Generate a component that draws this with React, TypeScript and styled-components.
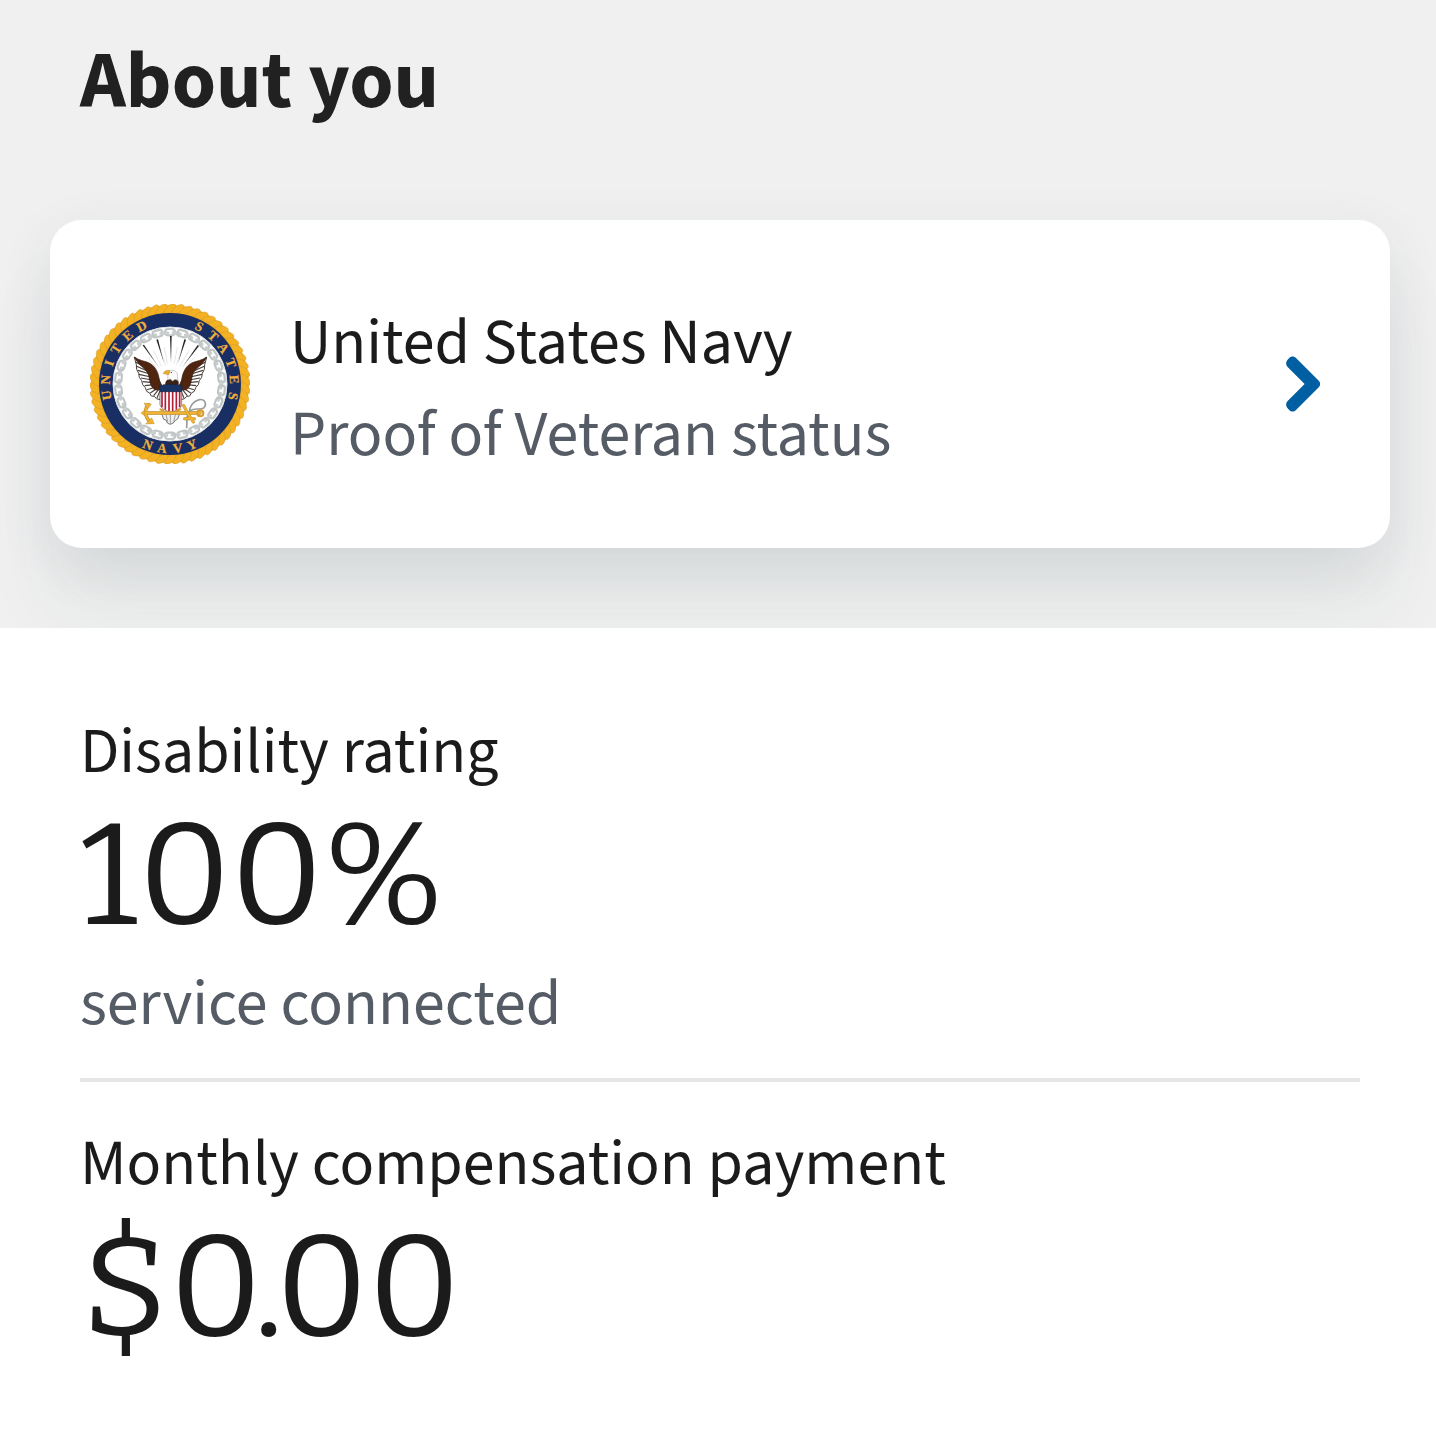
import React from "react";
import styled, { createGlobalStyle } from "styled-components";

const GlobalStyle = createGlobalStyle`
  * { box-sizing: border-box; }
  body {
    margin: 0;
    background: #ffffff;
    color: #1b1b1b;
    font-family: "Source Sans 3", "Noto Sans CJK SC", sans-serif;
  }
`;

const AboutSection = styled.section`
  padding: 30px 46px 80px 50px;
  background: #f0f0f0;
  overflow: hidden;
`;

const Heading = styled.h2`
  margin: 0 30px 86px;
  font-size: 80px;
  line-height: 104px;
  font-weight: 700;
  color: #212121;
`;

const ServiceCard = styled.button`
  display: flex;
  align-items: center;
  gap: 40px;
  width: 100%;
  padding: 67px 64px 67px 40px;
  border: 0;
  border-radius: 32px;
  background: #ffffff;
  box-shadow:
    0 16px 56px rgba(30, 60, 75, 0.09),
    0 64px 80px rgba(30, 60, 75, 0.06);
  font: inherit;
  text-align: left;
  cursor: pointer;
`;

const CardText = styled.span`
  flex: 1;
  min-width: 0;
  padding-top: 10px;
`;

const Line = styled.span<{ $muted?: boolean }>`
  display: block;
  font-size: 64px;
  line-height: 92px;
  color: ${(p) => (p.$muted ? "#565c65" : "#1b1b1b")};
`;

const Facts = styled.dl`
  margin: 0;
  padding: 78px 76px 80px 80px;
  background: #ffffff;
`;

const Fact = styled.div`
  & + & {
    margin-top: 28px;
    padding-top: 36px;
    border-top: 4px solid #e6e6e6;
  }
`;

const Label = styled.dt`
  font-size: 64px;
  line-height: 92px;
`;

const Detail = styled.dd`
  display: grid;
  gap: 4px;
  margin: 0;
`;

const Figure = styled.span`
  font-family: Bitter, "DejaVu Serif", serif;
  font-size: 144px;
  line-height: 156px;
`;

const EmblemSvg = styled.svg`
  flex: none;
  width: 160px;
  height: 160px;
`;

const ChevronSvg = styled.svg`
  flex: none;
  width: 46px;
  height: 64px;
`;

const LETTERS: [string, number][] = [
  ["U", -100], ["N", -86], ["I", -71], ["T", -57], ["E", -41], ["D", -26],
  ["S", 27], ["T", 42], ["A", 56], ["T", 71], ["E", 86], ["S", 101],
];
const BASE_LETTERS: [string, number][] = [["N", 20], ["A", 7], ["V", -7], ["Y", -20]];

const range = (n: number) => Array.from({ length: n }, (_, i) => i);

function Wing() {
  return (
    <g>
      <path
        d="M163 190 L169 212 L170 226 L176 238 L178 250 L185 260 L188 272 L196 281 L200 292 L209 297 L214 306 L223 307 L229 314 L240 317 L244 272 L226 235 Z"
        fill="#fff" stroke="#4a403c" strokeWidth="3"
      />
      <path
        d="M168 205 L205 225 M170 217 L207 233 M174 229 L210 240 M177 241 L213 249 M183 252 L216 258 M188 263 L219 266 M194 275 L224 272 M201 287 L230 278 M211 297 L234 281 M221 305 L238 284 M231 312 L242 286"
        stroke="#4a403c" strokeWidth="3.4" fill="none"
      />
      <path
        d="M163 189 C178 200 191 200 206 206 C224 214 235 235 237 252 C239 264 241 270 246 274 L240 286 C231 290 221 288 216 279 C208 267 209 251 204 239 C196 222 175 214 163 189Z"
        fill="#50250f" stroke="#321a12" strokeWidth="2"
      />
    </g>
  );
}

function NavyEmblem() {
  return (
    <EmblemSvg viewBox="30 30 480 480" aria-hidden="true">
      <circle cx="270" cy="270" r="236" fill="#f1ae20" stroke="#d9a032" strokeWidth="1" />
      {range(58).map((i) => (
        <g key={i} transform={`rotate(${(i * 360) / 58} 270 270)`}>
          <ellipse cx="270" cy="44" rx="20" ry="10" transform="rotate(-38 270 44)" fill="#f4b223" stroke="#cf9a32" strokeWidth="1.4" />
        </g>
      ))}
      <circle cx="270" cy="270" r="213" fill="#192f64" />
      <circle cx="270" cy="270" r="171" fill="#fff" stroke="#dfe2e6" strokeWidth="3" />
      {range(26).map((i) => (
        <g key={i} transform={`rotate(${(i * 360) / 26} 270 270)`} fill="none" stroke="#c0c5c5">
          <rect x="255" y="105" width="30" height="19" rx="9" strokeWidth="6.5" />
          <path d="M280 116 L300 120" strokeWidth="10" strokeLinecap="round" stroke="#cacece" />
        </g>
      ))}
      <g
        fill="#f0b03c"
        stroke="#f0b03c"
        strokeWidth="0.6"
        fontFamily="Liberation Serif, serif"
        fontSize="40"
        fontWeight="700"
        textAnchor="middle"
      >
        {LETTERS.map(([c, a]) => (
          <text key={a} x="270" y="90" transform={`rotate(${a} 270 270)`}>{c}</text>
        ))}
        {BASE_LETTERS.map(([c, a]) => (
          <text key={a} x="270" y="477" transform={`rotate(${a} 270 270)`}>{c}</text>
        ))}
      </g>

      <g fill="#222">
        <path d="M188 154 L192 152 L234 216Z" />
        <path d="M229 137 L234 136 L252 207Z" />
        <path d="M270 126 L275 126 L273 207Z" />
        <path d="M313 136 L318 137 L294 207Z" />
        <path d="M353 153 L357 156 L309 217Z" />
      </g>
      <path
        d="M220 170 L244 216 M204 190 L230 224 M253 160 L262 208 M292 160 L283 208 M327 170 L300 216 M343 190 L314 224 M211 180 L236 220 M334 180 L308 220 M242 170 L256 212 M304 170 L289 212"
        stroke="#cccccc" strokeWidth="1.4"
      />

      <Wing />
      <g transform="translate(543 0) scale(-1 1)"><Wing /></g>

      <path d="M245 359 L251 376 L258 378 L262 387 L270 391 L280 387 L286 379 L293 375 L300 357Z" fill="#eee" stroke="#777" strokeWidth="3" />
      <path d="M258 360 L263 383 M271 358 L271 389 M287 359 L281 383" stroke="#777" strokeWidth="2" />
      <path d="M257 274 C253 264 261 256 270 254 L278 258 L286 253 C295 257 298 265 295 274Z" fill="#3b2116" />
      <path d="M264 239 C265 226 284 226 290 235 C295 243 290 249 294 259 L285 256 L278 261 L271 255 L263 257Z" fill="#fafafa" stroke="#b5b5b5" strokeWidth="2" />
      <path d="M270 230 C261 227 251 231 250 240 C257 237 260 245 267 241Z" fill="#e8ad2d" stroke="#9b752a" strokeWidth="1" />
      <circle cx="274" cy="235" r="2" fill="#333" />

      <path d="M240 290 H305 V332 C303 344 289 350 272 355 C256 350 242 343 240 331Z" fill="#fff" stroke="#5d4444" strokeWidth="2" />
      <path d="M246 291V340 M256 291V347 M267 291V352 M278 291V352 M289 291V347 M299 291V340" stroke="#b51e37" strokeWidth="5" />
      <path d="M239 273 L244 276 L251 272 H294 L301 276 L307 273 L305 293 H240Z" fill="#193464" stroke="#15264c" strokeWidth="2" />

      <path d="M320 403 C321 380 318 361 331 350 C344 340 359 349 371 342 C382 331 375 314 358 317 C340 321 328 338 329 352" fill="none" stroke="#999d9e" strokeWidth="5" />
      <g fill="none" stroke="#b5842a" strokeLinecap="round" strokeLinejoin="round">
        <path d="M192 357 H360 M206 332 C192 342 194 371 212 385" strokeWidth="10" />
        <path d="M192 357 H360 M206 332 C192 342 194 371 212 385" strokeWidth="7" stroke="#f1b332" />
        <path d="M311 335 L325 361 L340 384 M343 374 L314 374" strokeWidth="9" />
        <path d="M311 335 L325 361 L340 384 M343 374 L314 374" strokeWidth="7" stroke="#f1b332" />
        <circle cx="361" cy="358" r="9" strokeWidth="6" stroke="#d99c2a" />
      </g>
      <path d="M192 327 L214 330 L203 346Z M197 390 L223 389 L215 371Z M183 357 L194 348 V366Z" fill="#f1b332" stroke="#a67924" strokeWidth="1" />
      <path d="M241 346 L250 350 M291 350 L301 346" stroke="#d89a2c" strokeWidth="6" strokeLinecap="round" />
    </EmblemSvg>
  );
}

function Chevron() {
  return (
    <ChevronSvg viewBox="0 0 46 64" aria-hidden="true">
      <path
        d="M7.6 15 C5.6 13 5.6 9.8 7.6 7.8 L9.2 6 C11.2 4 14 4 16 6 L39 29 C40.6 30.6 40.6 33.4 39 35 L16 58 C14 60 11.2 60 9.2 58 L7.6 56.2 C5.6 54.2 5.6 51 7.6 49 L24.6 32Z"
        fill="#005ea2"
      />
    </ChevronSvg>
  );
}

type FactProps = { label: string; figure: string; note?: string };

function FactRow({ label, figure, note }: FactProps) {
  return (
    <Fact>
      <Label>{label}</Label>
      <Detail>
        <Figure>{figure}</Figure>
        {note && <Line $muted>{note}</Line>}
      </Detail>
    </Fact>
  );
}

export default function App() {
  return (
    <main>
      <GlobalStyle />
      <AboutSection>
        <Heading>About you</Heading>
        <ServiceCard type="button">
          <NavyEmblem />
          <CardText>
            <Line>United States Navy</Line>
            <Line $muted>Proof of Veteran status</Line>
          </CardText>
          <Chevron />
        </ServiceCard>
      </AboutSection>
      <Facts>
        <FactRow label="Disability rating" figure="100%" note="service connected" />
        <FactRow label="Monthly compensation payment" figure="$0.00" />
      </Facts>
    </main>
  );
}
